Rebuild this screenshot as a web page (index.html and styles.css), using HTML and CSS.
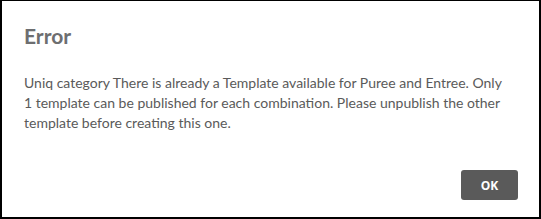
FILE: index.html
```html
<!DOCTYPE html>
<html lang="en">
<head>
    <meta charset="UTF-8">
    <title>Error</title>
    <link rel="stylesheet" href="styles.css">
</head>
<body>
    <div class="modal">
        <h2 class="modal-title">Error</h2>
        <p class="modal-body">Uniq category There is already a Template available for Puree and Entree. Only 1 template can be published for each combination. Please unpublish the other template before creating this one.</p>
        <div class="modal-footer">
            <button class="btn-ok">OK</button>
        </div>
    </div>
</body>
</html>
```

FILE: styles.css
```css
html, body {
    margin: 0;
    padding: 0;
    background: #fff;
}
body {
    font-family: Lato, "Open Sans", sans-serif;
}
.modal {
    box-sizing: border-box;
    width: 541px;
    height: 219px;
    border-style: solid;
    border-color: #000;
    border-width: 1px 2px 2px 2px;
    padding: 22px 21px 0 22px;
    display: flex;
    flex-direction: column;
}
.modal-title {
    margin: 0;
    font-size: 21px;
    font-weight: bold;
    color: #6d6e70;
    line-height: 26px;
}
.modal-body {
    margin: 24px 0 0 0;
    max-width: 482px;
    font-size: 14px;
    line-height: 20px;
    color: #5a5a5a;
}
.modal-footer {
    display: flex;
    justify-content: flex-end;
    margin-top: auto;
    padding: 0 0 17px 0;
}
.btn-ok {
    width: 57px;
    height: 30px;
    background-color: #5a5a5a;
    color: #fff;
    border: none;
    border-radius: 3px;
    font-family: "Open Sans", Arial, sans-serif;
    font-size: 12px;
    font-weight: bold;
    cursor: pointer;
}
```
